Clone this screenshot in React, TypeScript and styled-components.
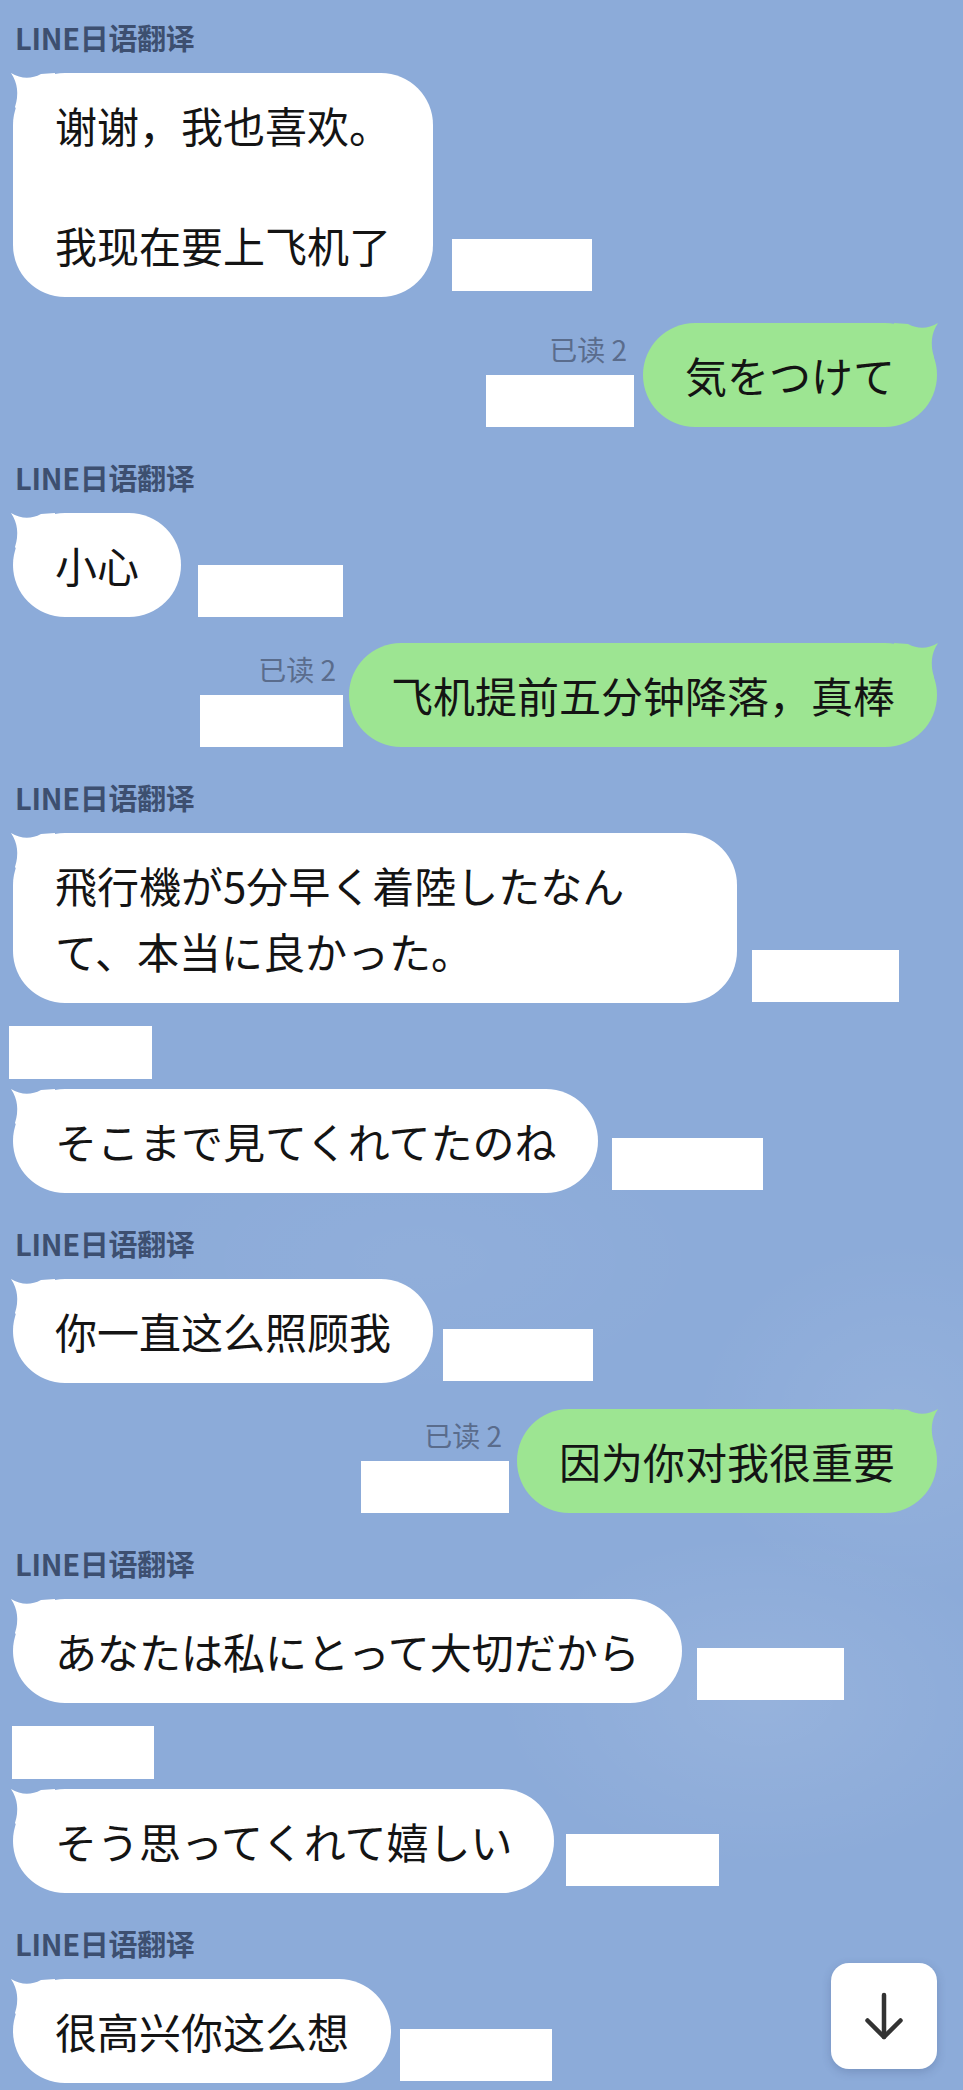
import styled, { createGlobalStyle } from 'styled-components';

type Stamp = { w: number; gap: number; lift?: number };

type Item =
  | { kind: 'label' }
  | { kind: 'mask'; w: number; left: number }
  | { kind: 'in' | 'out'; lines: string[]; jp?: boolean; stamp: Stamp };

const SENDER = 'LINE日语翻译';

const items: Item[] = [
  { kind: 'label' },
  { kind: 'in', lines: ['谢谢，我也喜欢。', '我现在要上飞机了'], stamp: { w: 140, gap: 19, lift: 6 } },
  { kind: 'out', lines: ['気をつけて'], jp: true, stamp: { w: 148, gap: 9 } },
  { kind: 'label' },
  { kind: 'in', lines: ['小心'], stamp: { w: 145, gap: 17 } },
  { kind: 'out', lines: ['飞机提前五分钟降落，真棒'], stamp: { w: 143, gap: 6 } },
  { kind: 'label' },
  { kind: 'in', lines: ['飛行機が5分早く着陸したなんて、本当に良かった。'], jp: true, stamp: { w: 147, gap: 15, lift: 1 } },
  { kind: 'mask', w: 143, left: 9 },
  { kind: 'in', lines: ['そこまで見てくれてたのね'], jp: true, stamp: { w: 151, gap: 14, lift: 3 } },
  { kind: 'label' },
  { kind: 'in', lines: ['你一直这么照顾我'], stamp: { w: 150, gap: 10, lift: 2 } },
  { kind: 'out', lines: ['因为你对我很重要'], stamp: { w: 148, gap: 8 } },
  { kind: 'label' },
  { kind: 'in', lines: ['あなたは私にとって大切だから'], jp: true, stamp: { w: 147, gap: 15, lift: 3 } },
  { kind: 'mask', w: 142, left: 12 },
  { kind: 'in', lines: ['そう思ってくれて嬉しい'], jp: true, stamp: { w: 153, gap: 12, lift: 7 } },
  { kind: 'label' },
  { kind: 'in', lines: ['很高兴你这么想'], stamp: { w: 152, gap: 9, lift: 2 } },
];

// spacing between rows depends on what came before
function topFor(prev: Item | undefined, cur: Item) {
  if (!prev) return 0;
  if (cur.kind === 'label') return 35;
  if (prev.kind === 'label') return 21;
  if (cur.kind === 'mask') return 23;
  if (prev.kind === 'mask') return 10;
  return 26;
}

const GlobalStyle = createGlobalStyle`
  html, body {
    margin: 0;
    padding: 0;
    background: #8cabd9;
  }
  body {
    font-family: "Noto Sans CJK SC", "Noto Sans", sans-serif;
  }
`;

const Page = styled.div`
  position: relative;
  width: 963px;
  min-height: 2090px;
  box-sizing: border-box;
  padding: 22px 26px 0 13px;
  overflow: hidden;
  display: flex;
  flex-direction: column;
  background:
    radial-gradient(ellipse 380px 240px at 760px 1700px, rgba(255, 255, 255, 0.09), transparent 70%),
    radial-gradient(ellipse 300px 260px at 900px 1420px, rgba(255, 255, 255, 0.07), transparent 70%),
    radial-gradient(ellipse 420px 200px at 420px 1260px, rgba(255, 255, 255, 0.04), transparent 70%),
    #8cabd9;
`;

const Sender = styled.div<{ $top: number }>`
  margin: ${(p) => p.$top}px 0 0 2px;
  font-family: "Noto Sans CJK SC", sans-serif;
  font-weight: 700;
  font-size: 29px;
  line-height: 30px;
  letter-spacing: -0.3px;
  color: #3d4f70;
`;

const InRow = styled.div<{ $top: number }>`
  display: flex;
  align-items: flex-end;
  margin-top: ${(p) => p.$top}px;
`;

const OutRow = styled.div<{ $top: number }>`
  display: flex;
  justify-content: flex-end;
  align-items: stretch;
  margin-top: ${(p) => p.$top}px;
`;

const Bubble = styled.div<{ $out?: boolean; $jp?: boolean }>`
  position: relative;
  box-sizing: border-box;
  max-width: 724px;
  padding: 19px 42px;
  border-radius: 52px;
  background: ${(p) => (p.$out ? '#9de592' : '#ffffff')};
  color: #141414;
  font-family: ${(p) => (p.$jp ? '"Noto Sans CJK JP"' : '"Noto Sans CJK SC"')}, sans-serif;
  font-size: 42px;
  line-height: 66px;
  line-break: strict;

  &::before {
    content: '';
    position: absolute;
    top: 0;
    ${(p) => (p.$out ? 'right: -1px; transform: scaleX(-1);' : 'left: -2px;')}
    width: 44px;
    height: 44px;
    background: inherit;
    clip-path: path('M0 0 Q15 9 30 1 L44 0 L44 44 L10 44 L4 34 Q10 15 0 0 Z');
  }
`;

const Para = styled.div`
  & + & {
    margin-top: 54px;
  }
`;

const Meta = styled.div<{ $gap: number }>`
  display: flex;
  flex-direction: column;
  align-items: flex-end;
  margin-right: ${(p) => p.$gap}px;
  padding-top: 10px;
`;

const ReadMark = styled.span`
  margin-right: 7px;
  font-family: "Noto Sans CJK SC", sans-serif;
  font-size: 28px;
  line-height: 32px;
  color: #5a6c8c;
`;

const Redact = styled.div<{ $w: number; $gap?: number; $lift?: number }>`
  flex: none;
  width: ${(p) => p.$w}px;
  height: 52px;
  margin-left: ${(p) => p.$gap ?? 0}px;
  margin-bottom: ${(p) => p.$lift ?? 0}px;
  background: #ffffff;
`;

const OutRedact = styled(Redact)`
  margin-top: auto;
`;

const Mask = styled.div<{ $top: number; $w: number; $left: number }>`
  width: ${(p) => p.$w}px;
  height: 53px;
  margin-top: ${(p) => p.$top}px;
  margin-left: ${(p) => p.$left - 13}px;
  background: #ffffff;
`;

const ScrollDown = styled.button`
  position: absolute;
  right: 26px;
  bottom: 21px;
  width: 106px;
  height: 106px;
  padding: 0;
  border: none;
  border-radius: 18px;
  background: #ffffff;
  box-shadow: 0 3px 10px rgba(40, 60, 100, 0.22);
  display: flex;
  align-items: center;
  justify-content: center;
`;

function ArrowDown() {
  return (
    <svg width="40" height="50" viewBox="0 0 40 50" fill="none">
      <path d="M20 4 V46" stroke="#333" strokeWidth="4.5" strokeLinecap="round" />
      <path d="M3.5 29.5 L20 46 L36.5 29.5" stroke="#333" strokeWidth="4.5" strokeLinecap="round" strokeLinejoin="round" />
    </svg>
  );
}

function Lines({ lines }: { lines: string[] }) {
  return (
    <>
      {lines.map((l, i) => (
        <Para key={i}>{l}</Para>
      ))}
    </>
  );
}

export default function App() {
  return (
    <>
      <GlobalStyle />
      <Page>
        {items.map((item, i) => {
          const top = topFor(items[i - 1], item);
          if (item.kind === 'label') {
            return (
              <Sender key={i} $top={top}>
                {SENDER}
              </Sender>
            );
          }
          if (item.kind === 'mask') {
            return <Mask key={i} $top={top} $w={item.w} $left={item.left} />;
          }
          if (item.kind === 'in') {
            return (
              <InRow key={i} $top={top}>
                <Bubble $jp={item.jp} lang={item.jp ? 'ja' : 'zh-CN'}>
                  <Lines lines={item.lines} />
                </Bubble>
                <Redact $w={item.stamp.w} $gap={item.stamp.gap} $lift={item.stamp.lift} />
              </InRow>
            );
          }
          return (
            <OutRow key={i} $top={top}>
              <Meta $gap={item.stamp.gap}>
                <ReadMark>已读 2</ReadMark>
                <OutRedact $w={item.stamp.w} />
              </Meta>
              <Bubble $out $jp={item.jp} lang={item.jp ? 'ja' : 'zh-CN'}>
                <Lines lines={item.lines} />
              </Bubble>
            </OutRow>
          );
        })}
        <ScrollDown aria-label="scroll to bottom">
          <ArrowDown />
        </ScrollDown>
      </Page>
    </>
  );
}
